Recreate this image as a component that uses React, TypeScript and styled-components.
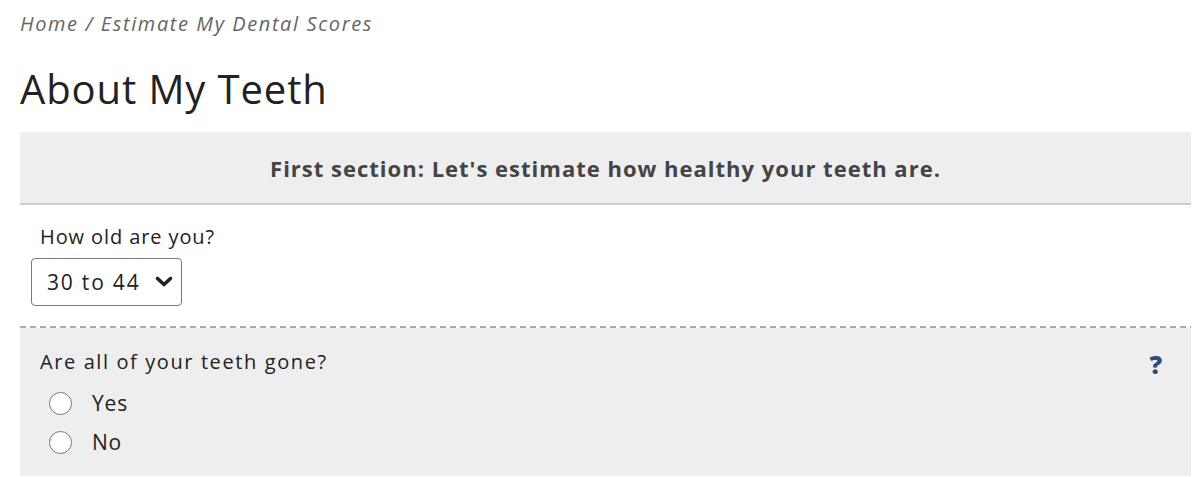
import React from "react";
import styled, { createGlobalStyle } from "styled-components";

const Global = createGlobalStyle`
  html, body { margin: 0; padding: 0; background: #fff; }
  body { font-family: "Open Sans", "Noto Sans", sans-serif; color: #222; }
  * { box-sizing: border-box; }
`;

const Page = styled.div`
  width: 1200px;
  height: 477px;
  overflow: hidden;
  padding: 10px 9px 0 20px;
`;

const Breadcrumb = styled.nav`
  font-size: 20px;
  font-style: italic;
  color: #666;
  line-height: 28px;
  letter-spacing: 1.6px;
  a { color: inherit; text-decoration: none; }
`;

const Title = styled.h1`
  margin: 27px 0 0;
  font-size: 40px;
  font-weight: 400;
  line-height: 48px;
  letter-spacing: 0.9px;
  color: #222;
`;

const SectionHeader = styled.div`
  margin-top: 19px;
  background: #eeeeee;
  border-bottom: 2px solid #cccccc;
  height: 73px;
  display: flex;
  align-items: center;
  justify-content: center;
  font-size: 22px;
  font-weight: 700;
  letter-spacing: 1px;
  color: #444;
`;

const Question = styled.div<{ $shaded?: boolean }>`
  background: ${(p) => (p.$shaded ? "#eeeeee" : "#fff")};
  padding: 20px 30px 20px 20px;
  position: relative;
`;

const Divider = styled.div`
  height: 2px;
  background-image: linear-gradient(to right, #aaa 0, #aaa 6px, transparent 6px);
  background-size: 10px 2px;
  background-repeat: repeat-x;
`;

const QuestionLabel = styled.div<{ $spacing?: number; $offset?: number }>`
  font-size: 20px;
  line-height: 24px;
  letter-spacing: ${(p) => p.$spacing ?? 1}px;
  margin-top: ${(p) => p.$offset ?? 0}px;
  color: #222;
`;

const SelectWrap = styled.div`
  position: relative;
  display: inline-flex;
  align-items: center;
  margin: 9px 0 0 -9px;
  width: 151px;
  height: 48px;
  border: 1px solid #777;
  border-radius: 4px;
  background: #fff;
`;

const Select = styled.select`
  appearance: none;
  border: none;
  background: transparent;
  font-family: inherit;
  font-size: 21px;
  letter-spacing: 1.8px;
  color: #222;
  padding: 0 40px 0 15px;
  width: 100%;
  height: 100%;
  outline: none;
`;

const Chevron = styled.svg`
  position: absolute;
  right: 7px;
  top: 50%;
  transform: translateY(-50%);
  pointer-events: none;
`;

const Help = styled.span`
  position: absolute;
  right: 29px;
  top: 19px;
  font-size: 25px;
  font-weight: 800;
  color: #2a4a80;
`;

const Options = styled.div`
  display: flex;
  flex-direction: column;
  gap: 11px;
  margin-top: 15px;
  padding-left: 9px;
`;

const Option = styled.label`
  display: flex;
  align-items: center;
  gap: 20px;
  font-size: 21px;
  line-height: 28px;
  letter-spacing: 0.8px;
  color: #222;
`;

const Radio = styled.input`
  appearance: none;
  margin: 0;
  width: 23px;
  height: 23px;
  border: 1.5px solid #777;
  border-radius: 50%;
  background: #fff;
`;

export default function App() {
  return (
    <>
      <Global />
      <Page>
        <Breadcrumb>
          <a href="#">Home</a> / Estimate My Dental Scores
        </Breadcrumb>
        <Title>About My Teeth</Title>
        <SectionHeader>First section: Let's estimate how healthy your teeth are.</SectionHeader>
        <Question>
          <QuestionLabel $spacing={0.9}>How old are you?</QuestionLabel>
          <SelectWrap>
            <Select defaultValue="30-44">
              <option value="30-44">30 to 44</option>
            </Select>
            <Chevron width="20" height="20" viewBox="0 0 20 20">
              <path d="M3.5 6.5 L10 12.5 L16.5 6.5" fill="none" stroke="#222" strokeWidth="3.6" strokeLinecap="round" strokeLinejoin="round" />
            </Chevron>
          </SelectWrap>
        </Question>
        <Divider />
        <Question $shaded>
          <QuestionLabel $spacing={1.6} $offset={2}>Are all of your teeth gone?</QuestionLabel>
          <Help>?</Help>
          <Options>
            <Option>
              <Radio type="radio" name="gone" /> Yes
            </Option>
            <Option>
              <Radio type="radio" name="gone" /> No
            </Option>
          </Options>
        </Question>
      </Page>
    </>
  );
}
